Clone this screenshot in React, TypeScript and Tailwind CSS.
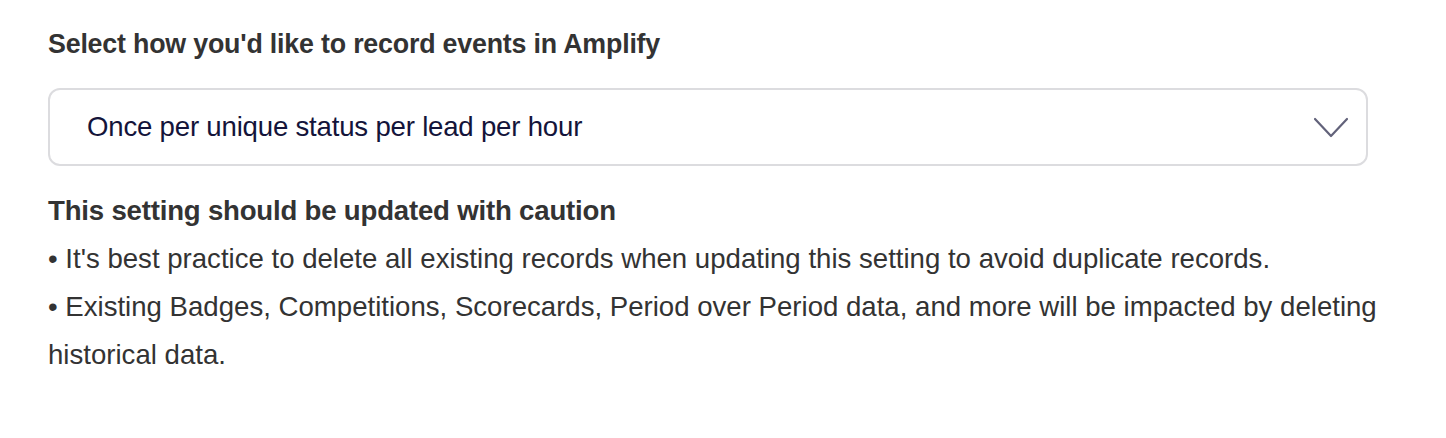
const notes = [
  "It's best practice to delete all existing records when updating this setting to avoid duplicate records.",
  "Existing Badges, Competitions, Scorecards, Period over Period data, and more will be impacted by deleting historical data.",
];

function Chevron() {
  return (
    <svg width="36" height="21" viewBox="0 0 36 21" fill="none" className="text-[#62627a]">
      <path d="M2 2 L18 19 L34 2" stroke="currentColor" strokeWidth="2.2" strokeLinecap="round" strokeLinejoin="round" />
    </svg>
  );
}

export default function App() {
  return (
    <div className="min-h-[438px] w-[1446px] bg-white pl-12 pt-[24px] font-['Liberation_Sans',Arial,sans-serif] text-[#333333]">
      <label className="block text-[26.8px] font-bold leading-[40px] tracking-[-0.2px]">
        Select how you'd like to record events in Amplify
      </label>

      <button className="mt-[24px] flex h-[78px] w-[1320px] items-center justify-between rounded-xl border-2 border-[#dcdcdf] bg-white pl-[37px] pr-[17px] text-left">
        <span className="text-[27.6px] tracking-[-0.2px] text-[#14143a]">
          Once per unique status per lead per hour
        </span>
        <Chevron />
      </button>

      <div className="mt-[21px] w-[1352px] text-[27.6px] leading-[48px]">
        <p className="font-bold tracking-[-0.2px]">
          This setting should be updated with caution
        </p>
        {notes.map((note) => (
          <p key={note}>• {note}</p>
        ))}
      </div>
    </div>
  );
}
